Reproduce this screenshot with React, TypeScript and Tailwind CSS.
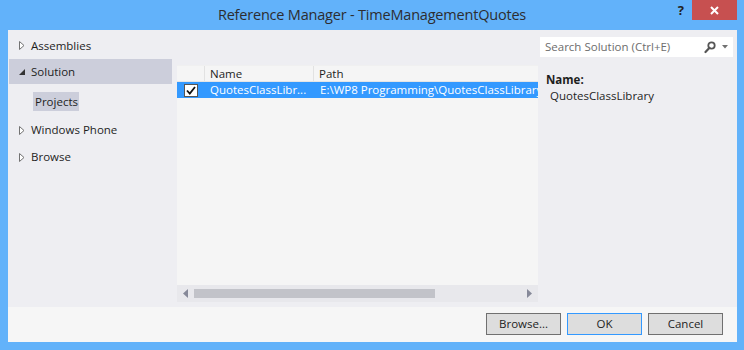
import React from "react";

const font = { fontFamily: '"Open Sans", "Noto Sans", sans-serif' };

function HollowTri() {
  return (
    <svg width="6" height="9" viewBox="0 0 6 9" className="shrink-0">
      <polygon points="0.5,0.5 5,4.5 0.5,8.5" fill="white" stroke="#727272" strokeWidth="1" />
    </svg>
  );
}

function FilledTri() {
  return (
    <svg width="6" height="6" viewBox="0 0 6 6" className="shrink-0">
      <polygon points="6,0 6,6 0,6" fill="#333" />
    </svg>
  );
}

export default function App() {
  return (
    <div className="w-[744px] h-[350px] bg-[#62B2FA] flex flex-col text-[#1E1E1E] overflow-hidden" style={font}>
      {/* Title bar */}
      <div className="h-[30px] grid grid-cols-[1fr_auto_1fr] shrink-0">
        <div />
        <div className="text-[14.5px] text-[#2D2D30] leading-[30px] tracking-[-0.2px]">Reference Manager - TimeManagementQuotes</div>
        <div className="flex justify-end items-start pr-[7px]">
          <div className="text-[13px] font-bold text-[#222] mt-[1px] mr-[8px] leading-[18px]">?</div>
          <div className="w-[45px] h-[20px] bg-[#C75050] flex items-center justify-center">
            <svg width="9" height="9" viewBox="0 0 9 9">
              <path d="M1 1 L8 8 M8 1 L1 8" stroke="white" strokeWidth="2" />
            </svg>
          </div>
        </div>
      </div>

      {/* Body */}
      <div className="flex-1 flex flex-col ml-[8px] mr-[7px] mb-[8px]">
        <div className="h-[277px] flex bg-[#EEEEF2] shrink-0">
          {/* Left tree */}
          <div className="w-[164px] shrink-0 flex flex-col text-[11.5px]">
            <div className="mt-[3px] h-[25px] flex items-center pl-[11px] gap-[6px]">
              <HollowTri />
              <span>Assemblies</span>
            </div>
            <div className="mt-[1px] ml-[1px] h-[25px] flex items-center pl-[10px] gap-[6px] bg-[#CCCEDB]">
              <FilledTri />
              <span>Solution</span>
            </div>
            <div className="mt-[8px] h-[19px] flex">
              <div className="ml-[25px] w-[46px] h-[19px] bg-[#CCCEDB] flex items-center pl-[2px]">Projects</div>
            </div>
            <div className="mt-[6px] h-[26px] flex items-center pl-[11px] gap-[6px]">
              <HollowTri />
              <span>Windows Phone</span>
            </div>
            <div className="mt-[1px] h-[26px] flex items-center pl-[11px] gap-[6px]">
              <HollowTri />
              <span>Browse</span>
            </div>
          </div>

          {/* Center list */}
          <div className="w-[361px] ml-[5px] shrink-0 flex flex-col pt-[35px] pb-[5px]">
            <div className="flex-1 flex flex-col bg-[#F5F5F5] text-[11.5px]">
              <div className="h-[17px] flex border-t border-[#F0F0F0] border-b border-b-[#E5E5E5] bg-[#F5F5F5] text-[#1E1E1E] shrink-0">
                <div className="w-[28px] border-r border-[#E2E2E2]" />
                <div className="w-[109px] border-r border-[#E2E2E2] pl-[5px] leading-[15px]">Name</div>
                <div className="flex-1 pl-[5px] leading-[15px]">Path</div>
              </div>
              <div className="h-[16px] flex bg-[#3399FF] text-white shrink-0 overflow-hidden whitespace-nowrap">
                <div className="w-[28px] flex items-center justify-center shrink-0">
                  <div className="w-[14px] h-[13px] bg-white border border-[#555] flex items-center justify-center">
                    <svg width="10" height="9" viewBox="0 0 10 9">
                      <path d="M1 4.5 L3.8 7.5 L9 1" stroke="#111" strokeWidth="1.8" fill="none" />
                    </svg>
                  </div>
                </div>
                <div className="w-[109px] pl-[5px] leading-[16px] shrink-0">QuotesClassLibr...</div>
                <div className="flex-1 pl-[6px] leading-[16px] overflow-hidden">E:\WP8 Programming\QuotesClassLibrary</div>
              </div>
              <div className="flex-1" />
              {/* Horizontal scrollbar */}
              <div className="h-[17px] bg-[#E8E8EC] flex items-center shrink-0">
                <div className="w-[17px] flex items-center justify-center">
                  <svg width="5" height="9" viewBox="0 0 5 9">
                    <polygon points="5,0 5,9 0,4.5" fill="#868999" />
                  </svg>
                </div>
                <div className="flex-1 h-[9px] flex">
                  <div className="w-[241px] h-[9px] bg-[#C2C3C9]" />
                </div>
                <div className="w-[17px] flex items-center justify-center">
                  <svg width="5" height="9" viewBox="0 0 5 9">
                    <polygon points="0,0 5,4.5 0,9" fill="#868999" />
                  </svg>
                </div>
              </div>
            </div>
          </div>

          {/* Right panel */}
          <div className="flex-1 flex flex-col">
            <div className="mt-[7px] ml-[2px] w-[193px] h-[20px] bg-white flex items-center pl-[5px] text-[11.5px] text-[#6D6D6D]">
              <span className="flex-1">Search Solution (Ctrl+E)</span>
              <svg width="12" height="13" viewBox="0 0 12 13" className="mr-[6px]">
                <circle cx="7.5" cy="4.5" r="3.2" fill="none" stroke="#555" strokeWidth="1.8" />
                <path d="M5.5 6.8 L1.5 11" stroke="#555" strokeWidth="2.2" strokeLinecap="round" />
              </svg>
              <svg width="6" height="4" viewBox="0 0 6 4" className="mr-[5px]">
                <polygon points="0,0 6,0 3,3.5" fill="#717171" />
              </svg>
            </div>
            <div className="mt-[15px] ml-[8px] text-[11.5px] font-bold leading-[16px]">Name:</div>
            <div className="ml-[12px] text-[11.5px] leading-[16px]">QuotesClassLibrary</div>
          </div>
        </div>

        {/* Bottom bar */}
        <div className="flex-1 bg-[#F6F6F6] flex justify-end items-start pt-[6px] pr-[14px] gap-[6px] text-[11.5px]">
          <button className="w-[75px] h-[22px] bg-[#DDDDDD] border border-[#707070] text-[#1E1E1E]">Browse...</button>
          <button className="w-[75px] h-[22px] bg-[#DDDDDD] border border-[#3399FF] text-[#1E1E1E]">OK</button>
          <button className="w-[75px] h-[22px] bg-[#DDDDDD] border border-[#707070] text-[#1E1E1E]">Cancel</button>
        </div>
      </div>
    </div>
  );
}
